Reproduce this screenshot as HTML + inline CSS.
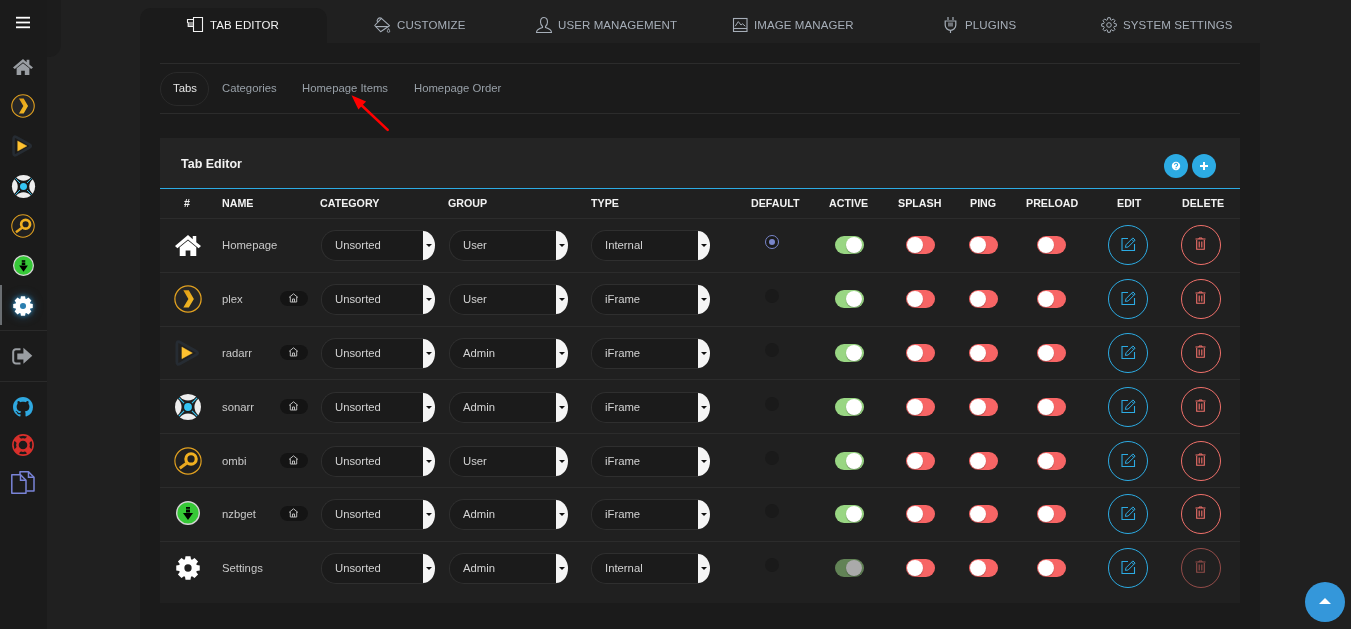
<!DOCTYPE html>
<html><head><meta charset="utf-8"><style>
html,body{margin:0;padding:0;width:1351px;height:629px;overflow:hidden;background:#202020;font-family:'Liberation Sans', sans-serif}
</style></head><body><div style="position:absolute;left:0;top:0;width:1351px;height:629px;will-change:transform">
<div style="position:absolute;left:0;top:0;width:47px;height:629px;background:#1b1b1b"></div><div style="position:absolute;left:47px;top:0;width:14px;height:57px;border-radius:0 0 12px 0;background:#1c1c1c"></div><svg style="position:absolute;left:16px;top:16px;" width="14" height="13" viewBox="0 0 14 13" preserveAspectRatio="none"><rect x="0" y="0.8" width="14" height="1.8" fill="#fff"/><rect x="0" y="5.6" width="14" height="1.8" fill="#fff"/><rect x="0" y="10.4" width="14" height="1.8" fill="#fff"/></svg><svg style="position:absolute;left:13px;top:59px;overflow:visible;" width="20" height="16" viewBox="1 2 22 19" preserveAspectRatio="none"><path d="M12 2 L1 12 L3 14 L12 6 L21 14 L23 12 L19 8.5 V3 H16 V5.8 Z" fill="#9a9ea3"/><path d="M5 13 L12 7 L19 13 V21 H14 V16 H10 V21 H5 Z" fill="#9a9ea3"/></svg><svg style="position:absolute;left:11px;top:94px;" width="24" height="24" viewBox="-14.3 -14.3 28.6 28.6" preserveAspectRatio="none"><defs><linearGradient id="pg" x1="0" y1="0" x2="1" y2="1"><stop offset="0" stop-color="#e09b12"/><stop offset="1" stop-color="#f7c02a"/></linearGradient></defs><circle cx="0" cy="0" r="13.4" fill="#262626" stroke="#e0a020" stroke-width="1.3"/><path d="M-4.8 -8.9 H0.8 L6 0 L0.8 8.8 H-4.8 L0.4 0 Z" fill="url(#pg)"/></svg><svg style="position:absolute;left:10px;top:133px;" width="24" height="26" viewBox="0 0 24 26" preserveAspectRatio="none"><path d="M3.60 5.80 Q3.60 2.60 6.39 4.16 L19.41 11.44 Q22.20 13.00 19.41 14.56 L6.39 21.84 Q3.60 23.40 3.60 20.20 Z" fill="none" stroke="#262c33" stroke-width="2.6"/><path d="M7.7 7.9 L16.9 13 L7.7 18.1 Z" fill="#ffc230" stroke="#ffc230" stroke-width="0.4" stroke-linejoin="round"/></svg><svg style="position:absolute;left:10.5px;top:173.7px;" width="25" height="25" viewBox="-14.3 -14.3 28.6 28.6" preserveAspectRatio="none"><path d="M-8.3 -10.6 A14.2 14.2 0 0 1 8.3 -10.6 A10.6 10.6 0 0 1 -8.3 -10.6 Z" fill="#eeeeee" transform="rotate(0)"/><path d="M-8.3 -10.6 A14.2 14.2 0 0 1 8.3 -10.6 A10.6 10.6 0 0 1 -8.3 -10.6 Z" fill="#eeeeee" transform="rotate(90)"/><path d="M-8.3 -10.6 A14.2 14.2 0 0 1 8.3 -10.6 A10.6 10.6 0 0 1 -8.3 -10.6 Z" fill="#eeeeee" transform="rotate(180)"/><path d="M-8.3 -10.6 A14.2 14.2 0 0 1 8.3 -10.6 A10.6 10.6 0 0 1 -8.3 -10.6 Z" fill="#eeeeee" transform="rotate(270)"/><path d="M-4 -4 L-9.3 -9.3 M4 -4 L9.3 -9.3 M-4 4 L-9.3 9.3 M4 4 L9.3 9.3" stroke="#35c5f4" stroke-width="1.1"/><circle cx="0" cy="0" r="5.2" fill="#1b1b1b"/><circle cx="0" cy="0" r="4" fill="#35c5f4"/></svg><svg style="position:absolute;left:11px;top:214px;" width="24" height="24" viewBox="-14.3 -14.3 28.6 28.6" preserveAspectRatio="none"><circle cx="0" cy="0" r="13.4" fill="#202020" stroke="#e0a020" stroke-width="1.2"/><circle cx="3.1" cy="-2.1" r="5.3" fill="none" stroke="#f0b020" stroke-width="3.2"/><path d="M-0.8 1.8 L-8.4 7.4" stroke="#e8a820" stroke-width="3" stroke-linecap="butt"/></svg><svg style="position:absolute;left:13px;top:255px;" width="21" height="21" viewBox="-12 -12 24 24" preserveAspectRatio="none"><circle cx="0" cy="0" r="11.3" fill="#36c837" stroke="#d4d4d4" stroke-width="1.4"/><rect x="-2" y="-6" width="4" height="1.8" fill="#000"/><rect x="-2" y="-3.5" width="4" height="3" fill="#000"/><path d="M-5 0 H5 L0 7 Z" fill="#000"/></svg><div style="position:absolute;left:0;top:285px;width:2px;height:40px;background:#6a6e72"></div><svg style="position:absolute;left:13px;top:296px;filter:drop-shadow(0 0 2px rgba(43,140,196,0.9)) drop-shadow(0 0 4px rgba(43,140,196,0.5));" width="20" height="20" viewBox="0 0 24 24" preserveAspectRatio="none"><path fill="#ffffff" d="M9.00 3.30 L9.51 0.26 L14.49 0.26 L15.00 3.30 L16.03 3.73 L18.54 1.94 L22.06 5.46 L20.27 7.97 L20.70 9.00 L23.74 9.51 L23.74 14.49 L20.70 15.00 L20.27 16.03 L22.06 18.54 L18.54 22.06 L16.03 20.27 L15.00 20.70 L14.49 23.74 L9.51 23.74 L9.00 20.70 L7.97 20.27 L5.46 22.06 L1.94 18.54 L3.73 16.03 L3.30 15.00 L0.26 14.49 L0.26 9.51 L3.30 9.00 L3.73 7.97 L1.94 5.46 L5.46 1.94 L7.97 3.73 Z"/><circle cx="12" cy="12" r="3.65" fill="#2a7fb0"/></svg><div style="position:absolute;left:0;top:330px;width:47px;height:1px;background:#2a2a2a"></div><div style="position:absolute;left:0;top:381px;width:47px;height:1px;background:#2a2a2a"></div><svg style="position:absolute;left:12px;top:347px;" width="21" height="18" viewBox="0 0 21 18" preserveAspectRatio="none"><path d="M8.5 2.3 H4 A2.7 2.7 0 0 0 1.2 5 V13.8 A2.7 2.7 0 0 0 4 16.4 H8.5" fill="none" stroke="#9a9ea3" stroke-width="2"/><path d="M5.3 6.4 H11.4 V0.8 L20.3 8.7 L11.4 16.7 V12.5 H5.3 Z" fill="#9a9ea3"/></svg><svg style="position:absolute;left:13px;top:397px;" width="20" height="20" viewBox="0 0 16 16" preserveAspectRatio="none"><path fill="#2fa8e0" d="M8 0C3.58 0 0 3.58 0 8c0 3.54 2.29 6.53 5.47 7.59.4.07.55-.17.55-.38 0-.19-.01-.82-.01-1.49-2.01.37-2.53-.49-2.69-.94-.09-.23-.48-.94-.82-1.13-.28-.15-.68-.52-.01-.53.63-.01 1.08.58 1.23.82.72 1.21 1.87.87 2.33.66.07-.52.28-.87.51-1.07-1.78-.2-3.64-.89-3.64-3.95 0-.87.31-1.59.82-2.15-.08-.2-.36-1.02.08-2.12 0 0 .67-.21 2.2.82.64-.18 1.32-.27 2-.27.68 0 1.36.09 2 .27 1.53-1.04 2.2-.82 2.2-.82.44 1.1.16 1.92.08 2.12.51.56.82 1.27.82 2.15 0 3.07-1.87 3.75-3.65 3.95.29.25.54.73.54 1.48 0 1.07-.01 1.93-.01 2.2 0 .21.15.46.55.38A8.013 8.013 0 0016 8c0-4.42-3.58-8-8-8z"/></svg><svg style="position:absolute;left:12px;top:434px;" width="22" height="22" viewBox="-11.2 -11.2 22.4 22.4" preserveAspectRatio="none"><circle r="11.1" fill="#d9302c"/><circle r="7.9" fill="none" stroke="#1b1b1b" stroke-width="3.2"/><path d="M-7 -7 L7 7 M7 -7 L-7 7" stroke="#d9302c" stroke-width="6"/><circle r="6.3" fill="none" stroke="#d9302c" stroke-width="1.4"/><circle r="4.4" fill="#1b1b1b"/></svg><svg style="position:absolute;left:11px;top:471px;" width="24" height="23" viewBox="0 0 24 23" preserveAspectRatio="none"><path d="M9 3.8 V0.8 H17.5 L23 6.3 V20.1 H15.5" fill="none" stroke="#7a84d8" stroke-width="1.5" stroke-linejoin="round"/><path d="M17.5 0.8 V6.3 H23" fill="none" stroke="#7a84d8" stroke-width="1.5"/><path d="M0.8 3.8 H9.5 L15 9.3 V22.2 H0.8 Z" fill="none" stroke="#7a84d8" stroke-width="1.5" stroke-linejoin="round"/><path d="M9.5 3.8 V9.3 H15" fill="none" stroke="#7a84d8" stroke-width="1.5"/></svg><div style="position:absolute;left:140px;top:8px;width:187px;height:40px;border-radius:11px 11px 0 0;background:#1b1b1b"></div><div style="position:absolute;left:140px;top:43px;width:1120px;height:586px;background:#1b1b1b"></div><div style="position:absolute;top:18px;font-family:'Liberation Sans', sans-serif;font-size:11.5px;letter-spacing:0.1px;white-space:nowrap;line-height:14px;left:210px;color:#f2f2f2">TAB EDITOR</div><div style="position:absolute;top:18px;font-family:'Liberation Sans', sans-serif;font-size:11.5px;letter-spacing:0.1px;white-space:nowrap;line-height:14px;left:397px;color:#a6aeb8">CUSTOMIZE</div><div style="position:absolute;top:18px;font-family:'Liberation Sans', sans-serif;font-size:11.5px;letter-spacing:0.1px;white-space:nowrap;line-height:14px;left:558px;color:#a6aeb8">USER MANAGEMENT</div><div style="position:absolute;top:18px;font-family:'Liberation Sans', sans-serif;font-size:11.5px;letter-spacing:0.1px;white-space:nowrap;line-height:14px;left:754px;color:#a6aeb8">IMAGE MANAGER</div><div style="position:absolute;top:18px;font-family:'Liberation Sans', sans-serif;font-size:11.5px;letter-spacing:0.1px;white-space:nowrap;line-height:14px;left:965px;color:#a6aeb8">PLUGINS</div><div style="position:absolute;top:18px;font-family:'Liberation Sans', sans-serif;font-size:11.5px;letter-spacing:0.1px;white-space:nowrap;line-height:14px;left:1123px;color:#a6aeb8">SYSTEM SETTINGS</div><svg style="position:absolute;left:186px;top:16px;" width="18" height="17" viewBox="0 0 18 17" preserveAspectRatio="none"><path d="M7.5 1.5 H16.5 V15.5 H7.5 Z" fill="none" stroke="#f2f2f2" stroke-width="1.1"/><rect x="2" y="6" width="5" height="4" fill="#8a8a8a"/><path d="M7.5 3.5 H1.5 V6.5 L2.2 7 V10.5 H7.5" fill="none" stroke="#f2f2f2" stroke-width="1.1"/></svg><svg style="position:absolute;left:372px;top:16px;" width="20" height="18" viewBox="0 0 20 18" preserveAspectRatio="none"><path d="M9.4 2.3 L17.5 9.7 L8.6 15.7 L2.7 9.5 Z" fill="none" stroke="#a6aeb8" stroke-width="1.05" stroke-linejoin="round"/><path d="M5.6 6.4 A2.9 2.9 0 0 1 9.4 2.3" fill="none" stroke="#a6aeb8" stroke-width="1.05"/><path d="M3.8 10.6 H15.8" stroke="#a6aeb8" stroke-width="1.2"/><path d="M16.5 12.6 L17.6 14.6 A1.2 1.2 0 1 1 15.4 14.6 Z" fill="none" stroke="#a6aeb8" stroke-width="0.9"/></svg><svg style="position:absolute;left:535px;top:16px;" width="18" height="18" viewBox="0 0 18 18" preserveAspectRatio="none"><path d="M9 1.5 C6.5 1.5 5.5 3.5 5.5 6 C5.5 8 6.5 9.5 7.5 10.5 L7.5 11.5 C4 12.5 1.5 14 1.5 16.5 H16.5 C16.5 14 14 12.5 10.5 11.5 L10.5 10.5 C11.5 9.5 12.5 8 12.5 6 C12.5 3.5 11.5 1.5 9 1.5 Z" fill="none" stroke="#a6aeb8" stroke-width="1.1"/></svg><svg style="position:absolute;left:732px;top:17px;" width="16" height="15" viewBox="0 0 16 15" preserveAspectRatio="none"><rect x="1.5" y="1.5" width="13.5" height="13" fill="none" stroke="#a6aeb8" stroke-width="1.1"/><path d="M3.2 9.2 L6.3 4.6 L9 8 L10.5 6.8 L13.3 9.2" fill="none" stroke="#a6aeb8" stroke-width="1"/><path d="M1.5 11.5 H15" stroke="#a6aeb8" stroke-width="1.1"/></svg><svg style="position:absolute;left:944px;top:16px;" width="13" height="18" viewBox="0 0 13 18" preserveAspectRatio="none"><path d="M4 1 V4 M9 1 V4" stroke="#a6aeb8" stroke-width="1.2"/><path d="M1.2 5 H11.8 V9 A5.3 5.3 0 0 1 1.2 9 Z" fill="none" stroke="#a6aeb8" stroke-width="1.2"/><rect x="4" y="6.5" width="5" height="4" fill="#a6aeb8" opacity="0.6"/><path d="M6.5 14.3 V17" stroke="#a6aeb8" stroke-width="1.2"/></svg><svg style="position:absolute;left:1100px;top:16px;" width="18" height="18" viewBox="0 0 18 18" preserveAspectRatio="none"><path fill="none" stroke="#a6aeb8" stroke-width="1" stroke-linejoin="round" d="M7.42 3.84 L7.84 1.69 L10.16 1.69 L10.58 3.84 L11.54 4.23 L13.35 3.01 L14.99 4.65 L13.77 6.46 L14.16 7.42 L16.31 7.84 L16.31 10.16 L14.16 10.58 L13.77 11.54 L14.99 13.35 L13.35 14.99 L11.54 13.77 L10.58 14.16 L10.16 16.31 L7.84 16.31 L7.42 14.16 L6.46 13.77 L4.65 14.99 L3.01 13.35 L4.23 11.54 L3.84 10.58 L1.69 10.16 L1.69 7.84 L3.84 7.42 L4.23 6.46 L3.01 4.65 L4.65 3.01 L6.46 4.23 Z"/><circle cx="9" cy="9" r="2.3" fill="none" stroke="#a6aeb8" stroke-width="1"/></svg><div style="position:absolute;left:160px;top:63px;width:1080px;height:1px;background:#2c2c2c"></div><div style="position:absolute;left:160px;top:113px;width:1080px;height:1px;background:#2c2c2c"></div><div style="position:absolute;left:160px;top:72px;width:47px;height:32px;border:1px solid #2a2a2a;border-radius:17px"></div><div style="position:absolute;top:81px;font-family:'Liberation Sans', sans-serif;font-size:11.3px;white-space:nowrap;line-height:14px;left:173px;color:#e6e6e6">Tabs</div><div style="position:absolute;top:81px;font-family:'Liberation Sans', sans-serif;font-size:11.3px;white-space:nowrap;line-height:14px;left:222px;color:#98a0a8">Categories</div><div style="position:absolute;top:81px;font-family:'Liberation Sans', sans-serif;font-size:11.3px;white-space:nowrap;line-height:14px;left:302px;color:#98a0a8">Homepage Items</div><div style="position:absolute;top:81px;font-family:'Liberation Sans', sans-serif;font-size:11.3px;white-space:nowrap;line-height:14px;left:414px;color:#98a0a8">Homepage Order</div><svg style="position:absolute;left:340px;top:85px;" width="60" height="50" viewBox="0 0 60 50" preserveAspectRatio="none"><path d="M47.7 44.9 L16 15" stroke="#ff0000" stroke-width="2.6" stroke-linecap="round"/><path d="M11.5 10.3 L26.1 16.5 L18.4 24.6 Z" fill="#ff0000"/></svg><div style="position:absolute;left:160px;top:138px;width:1080px;height:50px;background:#242424"></div><div style="position:absolute;left:160px;top:188px;width:1080px;height:415px;background:#202020"></div><div style="position:absolute;left:181px;top:157px;font-family:'Liberation Sans', sans-serif;font-size:12.5px;font-weight:bold;color:#f2f2f2;line-height:14px">Tab Editor</div><div style="position:absolute;left:1164px;top:154px;width:24px;height:24px;border-radius:50%;background:#2cabe3"></div><div style="position:absolute;left:1192px;top:154px;width:24px;height:24px;border-radius:50%;background:#2cabe3"></div><svg style="position:absolute;left:1170px;top:160px;" width="12" height="12" viewBox="0 0 12 12" preserveAspectRatio="none"><circle cx="6" cy="6" r="4.2" fill="#fff"/><path d="M4.6 4.9 A1.5 1.5 0 1 1 6.6 6.2 C6.1 6.5 6 6.8 6 7.2" fill="none" stroke="#2cabe3" stroke-width="1.1"/><circle cx="6" cy="8.6" r="0.6" fill="#2cabe3"/></svg><svg style="position:absolute;left:1198px;top:160px;" width="12" height="12" viewBox="0 0 12 12" preserveAspectRatio="none"><path d="M6 2 V10 M2 6 H10" stroke="#fff" stroke-width="2"/></svg><div style="position:absolute;left:160px;top:188px;width:1080px;height:1px;background:#2cabe3"></div><div style="position:absolute;top:197px;font-family:'Liberation Sans', sans-serif;font-size:10.7px;font-weight:bold;color:#f2f2f2;white-space:nowrap;line-height:12px;left:184px">#</div><div style="position:absolute;top:197px;font-family:'Liberation Sans', sans-serif;font-size:10.7px;font-weight:bold;color:#f2f2f2;white-space:nowrap;line-height:12px;left:222px">NAME</div><div style="position:absolute;top:197px;font-family:'Liberation Sans', sans-serif;font-size:10.7px;font-weight:bold;color:#f2f2f2;white-space:nowrap;line-height:12px;left:320px">CATEGORY</div><div style="position:absolute;top:197px;font-family:'Liberation Sans', sans-serif;font-size:10.7px;font-weight:bold;color:#f2f2f2;white-space:nowrap;line-height:12px;left:448px">GROUP</div><div style="position:absolute;top:197px;font-family:'Liberation Sans', sans-serif;font-size:10.7px;font-weight:bold;color:#f2f2f2;white-space:nowrap;line-height:12px;left:591px">TYPE</div><div style="position:absolute;top:197px;font-family:'Liberation Sans', sans-serif;font-size:10.7px;font-weight:bold;color:#f2f2f2;white-space:nowrap;line-height:12px;left:751px">DEFAULT</div><div style="position:absolute;top:197px;font-family:'Liberation Sans', sans-serif;font-size:10.7px;font-weight:bold;color:#f2f2f2;white-space:nowrap;line-height:12px;left:829px">ACTIVE</div><div style="position:absolute;top:197px;font-family:'Liberation Sans', sans-serif;font-size:10.7px;font-weight:bold;color:#f2f2f2;white-space:nowrap;line-height:12px;left:898px">SPLASH</div><div style="position:absolute;top:197px;font-family:'Liberation Sans', sans-serif;font-size:10.7px;font-weight:bold;color:#f2f2f2;white-space:nowrap;line-height:12px;left:970px">PING</div><div style="position:absolute;top:197px;font-family:'Liberation Sans', sans-serif;font-size:10.7px;font-weight:bold;color:#f2f2f2;white-space:nowrap;line-height:12px;left:1026px">PRELOAD</div><div style="position:absolute;top:197px;font-family:'Liberation Sans', sans-serif;font-size:10.7px;font-weight:bold;color:#f2f2f2;white-space:nowrap;line-height:12px;left:1117px">EDIT</div><div style="position:absolute;top:197px;font-family:'Liberation Sans', sans-serif;font-size:10.7px;font-weight:bold;color:#f2f2f2;white-space:nowrap;line-height:12px;left:1182px">DELETE</div><div style="position:absolute;left:160px;top:218px;width:1080px;height:1px;background:#2c2c2c"></div><svg style="position:absolute;left:175px;top:235px;" width="26" height="21" viewBox="1 2 22 19" preserveAspectRatio="none"><path d="M12 2 L1 12 L3 14 L12 6 L21 14 L23 12 L19 8.5 V3 H16 V5.8 Z" fill="#ffffff"/><path d="M5 13 L12 7 L19 13 V21 H14 V16 H10 V21 H5 Z" fill="#ffffff"/></svg><div style="position:absolute;left:222px;top:238px;font-family:'Liberation Sans', sans-serif;font-size:11.3px;color:#c9c9c9;line-height:14px;white-space:nowrap">Homepage</div><div style="position:absolute;left:321px;top:230px;width:102px;height:29px;border:1px solid #2f2f2f;border-radius:15px 0 0 15px;border-right:none;background:#1b1b1b"></div><div style="position:absolute;left:423px;top:231px;width:12px;height:29px;border-radius:0 100% 100% 0/0 50% 50% 0;background:#f5f5f5"></div><div style="position:absolute;left:426px;top:244px;width:0;height:0;border-left:3px solid transparent;border-right:3px solid transparent;border-top:3px solid #111"></div><div style="position:absolute;left:335px;top:238px;font-family:'Liberation Sans', sans-serif;font-size:11.3px;color:#d2d2d2;line-height:14px;white-space:nowrap">Unsorted</div><div style="position:absolute;left:449px;top:230px;width:107px;height:29px;border:1px solid #2f2f2f;border-radius:15px 0 0 15px;border-right:none;background:#1b1b1b"></div><div style="position:absolute;left:556px;top:231px;width:12px;height:29px;border-radius:0 100% 100% 0/0 50% 50% 0;background:#f5f5f5"></div><div style="position:absolute;left:559px;top:244px;width:0;height:0;border-left:3px solid transparent;border-right:3px solid transparent;border-top:3px solid #111"></div><div style="position:absolute;left:463px;top:238px;font-family:'Liberation Sans', sans-serif;font-size:11.3px;color:#d2d2d2;line-height:14px;white-space:nowrap">User</div><div style="position:absolute;left:591px;top:230px;width:107px;height:29px;border:1px solid #2f2f2f;border-radius:15px 0 0 15px;border-right:none;background:#1b1b1b"></div><div style="position:absolute;left:698px;top:231px;width:12px;height:29px;border-radius:0 100% 100% 0/0 50% 50% 0;background:#f5f5f5"></div><div style="position:absolute;left:701px;top:244px;width:0;height:0;border-left:3px solid transparent;border-right:3px solid transparent;border-top:3px solid #111"></div><div style="position:absolute;left:605px;top:238px;font-family:'Liberation Sans', sans-serif;font-size:11.3px;color:#d2d2d2;line-height:14px;white-space:nowrap">Internal</div><div style="position:absolute;left:765px;top:235px;width:12px;height:12px;border:1px solid #7986cb;border-radius:50%;background:#1a1a1a"></div><div style="position:absolute;left:769px;top:239px;width:6px;height:6px;border-radius:50%;background:#7986cb"></div><div style="position:absolute;left:835px;top:236px;width:29px;height:18px;border-radius:9px;background:#99d683"></div><div style="position:absolute;left:846px;top:237px;width:16px;height:16px;border-radius:50%;background:#fff;box-shadow:0 1px 1px rgba(0,0,0,0.3)"></div><div style="position:absolute;left:906px;top:236px;width:29px;height:18px;border-radius:9px;background:#f76565"></div><div style="position:absolute;left:907px;top:237px;width:16px;height:16px;border-radius:50%;background:#fff;box-shadow:0 1px 1px rgba(0,0,0,0.3)"></div><div style="position:absolute;left:969px;top:236px;width:29px;height:18px;border-radius:9px;background:#f76565"></div><div style="position:absolute;left:970px;top:237px;width:16px;height:16px;border-radius:50%;background:#fff;box-shadow:0 1px 1px rgba(0,0,0,0.3)"></div><div style="position:absolute;left:1037px;top:236px;width:29px;height:18px;border-radius:9px;background:#f76565"></div><div style="position:absolute;left:1038px;top:237px;width:16px;height:16px;border-radius:50%;background:#fff;box-shadow:0 1px 1px rgba(0,0,0,0.3)"></div><div style="position:absolute;left:1108px;top:225px;width:38px;height:38px;border:1px solid #2cabe3;border-radius:50%"></div><svg style="position:absolute;left:1120px;top:236px;" width="17" height="16" viewBox="0 0 17 16" preserveAspectRatio="none"><path d="M8 2.5 H2 V14.5 H14.5 V8" fill="none" stroke="#2cabe3" stroke-width="1.1"/><path d="M5.4 11.4 L6 8.8 L12.9 1.9 L15.1 4.1 L8.2 11 Z M11.6 3.2 L13.8 5.4" fill="none" stroke="#2cabe3" stroke-width="1" stroke-linejoin="round"/></svg><div style="position:absolute;left:1181px;top:225px;width:38px;height:38px;border:1px solid #f0706a;border-radius:50%;"></div><svg style="position:absolute;left:1195px;top:237px;" width="11" height="13" viewBox="0 0 11 13" preserveAspectRatio="none"><path d="M0.5 2 H10.5 M4 2 V1 H7 V2" fill="none" stroke="#f0706a" stroke-width="1"/><path d="M1.7 3 V12.3 H9.3 V3" fill="none" stroke="#f0706a" stroke-width="1.1"/><path d="M4.2 4.5 V10.5 M6.8 4.5 V10.5" stroke="#f0706a" stroke-width="1.1"/></svg><div style="position:absolute;left:160px;top:272px;width:1080px;height:1px;background:#2c2c2c"></div><svg style="position:absolute;left:174px;top:285px;" width="28" height="28" viewBox="-14.3 -14.3 28.6 28.6" preserveAspectRatio="none"><defs><linearGradient id="pg" x1="0" y1="0" x2="1" y2="1"><stop offset="0" stop-color="#e09b12"/><stop offset="1" stop-color="#f7c02a"/></linearGradient></defs><circle cx="0" cy="0" r="13.4" fill="#262626" stroke="#e0a020" stroke-width="1.3"/><path d="M-4.8 -8.9 H0.8 L6 0 L0.8 8.8 H-4.8 L0.4 0 Z" fill="url(#pg)"/></svg><div style="position:absolute;left:222px;top:292px;font-family:'Liberation Sans', sans-serif;font-size:11.3px;color:#c9c9c9;line-height:14px;white-space:nowrap">plex</div><div style="position:absolute;left:280px;top:291px;width:28px;height:15px;border-radius:8px;background:#141414"></div><svg style="position:absolute;left:288px;top:293px;" width="11" height="10" viewBox="0 0 11 10" preserveAspectRatio="none"><path d="M1 4.5 L5.5 0.8 L10 4.5" fill="none" stroke="#bbb" stroke-width="1"/><path d="M2.3 4 V9 H8.7 V4 M4.5 9 V6 H6.5 V9" fill="none" stroke="#bbb" stroke-width="1"/></svg><div style="position:absolute;left:321px;top:284px;width:102px;height:29px;border:1px solid #2f2f2f;border-radius:15px 0 0 15px;border-right:none;background:#1b1b1b"></div><div style="position:absolute;left:423px;top:285px;width:12px;height:29px;border-radius:0 100% 100% 0/0 50% 50% 0;background:#f5f5f5"></div><div style="position:absolute;left:426px;top:298px;width:0;height:0;border-left:3px solid transparent;border-right:3px solid transparent;border-top:3px solid #111"></div><div style="position:absolute;left:335px;top:292px;font-family:'Liberation Sans', sans-serif;font-size:11.3px;color:#d2d2d2;line-height:14px;white-space:nowrap">Unsorted</div><div style="position:absolute;left:449px;top:284px;width:107px;height:29px;border:1px solid #2f2f2f;border-radius:15px 0 0 15px;border-right:none;background:#1b1b1b"></div><div style="position:absolute;left:556px;top:285px;width:12px;height:29px;border-radius:0 100% 100% 0/0 50% 50% 0;background:#f5f5f5"></div><div style="position:absolute;left:559px;top:298px;width:0;height:0;border-left:3px solid transparent;border-right:3px solid transparent;border-top:3px solid #111"></div><div style="position:absolute;left:463px;top:292px;font-family:'Liberation Sans', sans-serif;font-size:11.3px;color:#d2d2d2;line-height:14px;white-space:nowrap">User</div><div style="position:absolute;left:591px;top:284px;width:107px;height:29px;border:1px solid #2f2f2f;border-radius:15px 0 0 15px;border-right:none;background:#1b1b1b"></div><div style="position:absolute;left:698px;top:285px;width:12px;height:29px;border-radius:0 100% 100% 0/0 50% 50% 0;background:#f5f5f5"></div><div style="position:absolute;left:701px;top:298px;width:0;height:0;border-left:3px solid transparent;border-right:3px solid transparent;border-top:3px solid #111"></div><div style="position:absolute;left:605px;top:292px;font-family:'Liberation Sans', sans-serif;font-size:11.3px;color:#d2d2d2;line-height:14px;white-space:nowrap">iFrame</div><div style="position:absolute;left:765px;top:289px;width:14px;height:14px;border-radius:50%;background:#1a1a1a"></div><div style="position:absolute;left:835px;top:290px;width:29px;height:18px;border-radius:9px;background:#99d683"></div><div style="position:absolute;left:846px;top:291px;width:16px;height:16px;border-radius:50%;background:#fff;box-shadow:0 1px 1px rgba(0,0,0,0.3)"></div><div style="position:absolute;left:906px;top:290px;width:29px;height:18px;border-radius:9px;background:#f76565"></div><div style="position:absolute;left:907px;top:291px;width:16px;height:16px;border-radius:50%;background:#fff;box-shadow:0 1px 1px rgba(0,0,0,0.3)"></div><div style="position:absolute;left:969px;top:290px;width:29px;height:18px;border-radius:9px;background:#f76565"></div><div style="position:absolute;left:970px;top:291px;width:16px;height:16px;border-radius:50%;background:#fff;box-shadow:0 1px 1px rgba(0,0,0,0.3)"></div><div style="position:absolute;left:1037px;top:290px;width:29px;height:18px;border-radius:9px;background:#f76565"></div><div style="position:absolute;left:1038px;top:291px;width:16px;height:16px;border-radius:50%;background:#fff;box-shadow:0 1px 1px rgba(0,0,0,0.3)"></div><div style="position:absolute;left:1108px;top:279px;width:38px;height:38px;border:1px solid #2cabe3;border-radius:50%"></div><svg style="position:absolute;left:1120px;top:290px;" width="17" height="16" viewBox="0 0 17 16" preserveAspectRatio="none"><path d="M8 2.5 H2 V14.5 H14.5 V8" fill="none" stroke="#2cabe3" stroke-width="1.1"/><path d="M5.4 11.4 L6 8.8 L12.9 1.9 L15.1 4.1 L8.2 11 Z M11.6 3.2 L13.8 5.4" fill="none" stroke="#2cabe3" stroke-width="1" stroke-linejoin="round"/></svg><div style="position:absolute;left:1181px;top:279px;width:38px;height:38px;border:1px solid #f0706a;border-radius:50%;"></div><svg style="position:absolute;left:1195px;top:291px;" width="11" height="13" viewBox="0 0 11 13" preserveAspectRatio="none"><path d="M0.5 2 H10.5 M4 2 V1 H7 V2" fill="none" stroke="#f0706a" stroke-width="1"/><path d="M1.7 3 V12.3 H9.3 V3" fill="none" stroke="#f0706a" stroke-width="1.1"/><path d="M4.2 4.5 V10.5 M6.8 4.5 V10.5" stroke="#f0706a" stroke-width="1.1"/></svg><div style="position:absolute;left:160px;top:326px;width:1080px;height:1px;background:#2c2c2c"></div><svg style="position:absolute;left:175px;top:339px;" width="26" height="28" viewBox="0 0 26 28" preserveAspectRatio="none"><path d="M1.90 5.00 Q1.90 1.40 5.04 3.16 L21.16 12.24 Q24.30 14.00 21.16 15.76 L5.04 24.84 Q1.90 26.60 1.90 23.00 Z" fill="none" stroke="#262c33" stroke-width="2.8"/><path d="M6.9 8 L17.4 14 L6.9 19.7 Z" fill="#ffc230" stroke="#ffc230" stroke-width="0.4" stroke-linejoin="round"/></svg><div style="position:absolute;left:222px;top:346px;font-family:'Liberation Sans', sans-serif;font-size:11.3px;color:#c9c9c9;line-height:14px;white-space:nowrap">radarr</div><div style="position:absolute;left:280px;top:345px;width:28px;height:15px;border-radius:8px;background:#141414"></div><svg style="position:absolute;left:288px;top:347px;" width="11" height="10" viewBox="0 0 11 10" preserveAspectRatio="none"><path d="M1 4.5 L5.5 0.8 L10 4.5" fill="none" stroke="#bbb" stroke-width="1"/><path d="M2.3 4 V9 H8.7 V4 M4.5 9 V6 H6.5 V9" fill="none" stroke="#bbb" stroke-width="1"/></svg><div style="position:absolute;left:321px;top:338px;width:102px;height:29px;border:1px solid #2f2f2f;border-radius:15px 0 0 15px;border-right:none;background:#1b1b1b"></div><div style="position:absolute;left:423px;top:339px;width:12px;height:29px;border-radius:0 100% 100% 0/0 50% 50% 0;background:#f5f5f5"></div><div style="position:absolute;left:426px;top:352px;width:0;height:0;border-left:3px solid transparent;border-right:3px solid transparent;border-top:3px solid #111"></div><div style="position:absolute;left:335px;top:346px;font-family:'Liberation Sans', sans-serif;font-size:11.3px;color:#d2d2d2;line-height:14px;white-space:nowrap">Unsorted</div><div style="position:absolute;left:449px;top:338px;width:107px;height:29px;border:1px solid #2f2f2f;border-radius:15px 0 0 15px;border-right:none;background:#1b1b1b"></div><div style="position:absolute;left:556px;top:339px;width:12px;height:29px;border-radius:0 100% 100% 0/0 50% 50% 0;background:#f5f5f5"></div><div style="position:absolute;left:559px;top:352px;width:0;height:0;border-left:3px solid transparent;border-right:3px solid transparent;border-top:3px solid #111"></div><div style="position:absolute;left:463px;top:346px;font-family:'Liberation Sans', sans-serif;font-size:11.3px;color:#d2d2d2;line-height:14px;white-space:nowrap">Admin</div><div style="position:absolute;left:591px;top:338px;width:107px;height:29px;border:1px solid #2f2f2f;border-radius:15px 0 0 15px;border-right:none;background:#1b1b1b"></div><div style="position:absolute;left:698px;top:339px;width:12px;height:29px;border-radius:0 100% 100% 0/0 50% 50% 0;background:#f5f5f5"></div><div style="position:absolute;left:701px;top:352px;width:0;height:0;border-left:3px solid transparent;border-right:3px solid transparent;border-top:3px solid #111"></div><div style="position:absolute;left:605px;top:346px;font-family:'Liberation Sans', sans-serif;font-size:11.3px;color:#d2d2d2;line-height:14px;white-space:nowrap">iFrame</div><div style="position:absolute;left:765px;top:343px;width:14px;height:14px;border-radius:50%;background:#1a1a1a"></div><div style="position:absolute;left:835px;top:344px;width:29px;height:18px;border-radius:9px;background:#99d683"></div><div style="position:absolute;left:846px;top:345px;width:16px;height:16px;border-radius:50%;background:#fff;box-shadow:0 1px 1px rgba(0,0,0,0.3)"></div><div style="position:absolute;left:906px;top:344px;width:29px;height:18px;border-radius:9px;background:#f76565"></div><div style="position:absolute;left:907px;top:345px;width:16px;height:16px;border-radius:50%;background:#fff;box-shadow:0 1px 1px rgba(0,0,0,0.3)"></div><div style="position:absolute;left:969px;top:344px;width:29px;height:18px;border-radius:9px;background:#f76565"></div><div style="position:absolute;left:970px;top:345px;width:16px;height:16px;border-radius:50%;background:#fff;box-shadow:0 1px 1px rgba(0,0,0,0.3)"></div><div style="position:absolute;left:1037px;top:344px;width:29px;height:18px;border-radius:9px;background:#f76565"></div><div style="position:absolute;left:1038px;top:345px;width:16px;height:16px;border-radius:50%;background:#fff;box-shadow:0 1px 1px rgba(0,0,0,0.3)"></div><div style="position:absolute;left:1108px;top:333px;width:38px;height:38px;border:1px solid #2cabe3;border-radius:50%"></div><svg style="position:absolute;left:1120px;top:344px;" width="17" height="16" viewBox="0 0 17 16" preserveAspectRatio="none"><path d="M8 2.5 H2 V14.5 H14.5 V8" fill="none" stroke="#2cabe3" stroke-width="1.1"/><path d="M5.4 11.4 L6 8.8 L12.9 1.9 L15.1 4.1 L8.2 11 Z M11.6 3.2 L13.8 5.4" fill="none" stroke="#2cabe3" stroke-width="1" stroke-linejoin="round"/></svg><div style="position:absolute;left:1181px;top:333px;width:38px;height:38px;border:1px solid #f0706a;border-radius:50%;"></div><svg style="position:absolute;left:1195px;top:345px;" width="11" height="13" viewBox="0 0 11 13" preserveAspectRatio="none"><path d="M0.5 2 H10.5 M4 2 V1 H7 V2" fill="none" stroke="#f0706a" stroke-width="1"/><path d="M1.7 3 V12.3 H9.3 V3" fill="none" stroke="#f0706a" stroke-width="1.1"/><path d="M4.2 4.5 V10.5 M6.8 4.5 V10.5" stroke="#f0706a" stroke-width="1.1"/></svg><div style="position:absolute;left:160px;top:379px;width:1080px;height:1px;background:#2c2c2c"></div><svg style="position:absolute;left:174px;top:393px;" width="28" height="28" viewBox="-14.3 -14.3 28.6 28.6" preserveAspectRatio="none"><path d="M-8.3 -10.6 A14.2 14.2 0 0 1 8.3 -10.6 A10.6 10.6 0 0 1 -8.3 -10.6 Z" fill="#eeeeee" transform="rotate(0)"/><path d="M-8.3 -10.6 A14.2 14.2 0 0 1 8.3 -10.6 A10.6 10.6 0 0 1 -8.3 -10.6 Z" fill="#eeeeee" transform="rotate(90)"/><path d="M-8.3 -10.6 A14.2 14.2 0 0 1 8.3 -10.6 A10.6 10.6 0 0 1 -8.3 -10.6 Z" fill="#eeeeee" transform="rotate(180)"/><path d="M-8.3 -10.6 A14.2 14.2 0 0 1 8.3 -10.6 A10.6 10.6 0 0 1 -8.3 -10.6 Z" fill="#eeeeee" transform="rotate(270)"/><path d="M-4 -4 L-9.3 -9.3 M4 -4 L9.3 -9.3 M-4 4 L-9.3 9.3 M4 4 L9.3 9.3" stroke="#35c5f4" stroke-width="1.1"/><circle cx="0" cy="0" r="5.2" fill="#1b1b1b"/><circle cx="0" cy="0" r="4" fill="#35c5f4"/></svg><div style="position:absolute;left:222px;top:400px;font-family:'Liberation Sans', sans-serif;font-size:11.3px;color:#c9c9c9;line-height:14px;white-space:nowrap">sonarr</div><div style="position:absolute;left:280px;top:399px;width:28px;height:15px;border-radius:8px;background:#141414"></div><svg style="position:absolute;left:288px;top:401px;" width="11" height="10" viewBox="0 0 11 10" preserveAspectRatio="none"><path d="M1 4.5 L5.5 0.8 L10 4.5" fill="none" stroke="#bbb" stroke-width="1"/><path d="M2.3 4 V9 H8.7 V4 M4.5 9 V6 H6.5 V9" fill="none" stroke="#bbb" stroke-width="1"/></svg><div style="position:absolute;left:321px;top:392px;width:102px;height:29px;border:1px solid #2f2f2f;border-radius:15px 0 0 15px;border-right:none;background:#1b1b1b"></div><div style="position:absolute;left:423px;top:393px;width:12px;height:29px;border-radius:0 100% 100% 0/0 50% 50% 0;background:#f5f5f5"></div><div style="position:absolute;left:426px;top:406px;width:0;height:0;border-left:3px solid transparent;border-right:3px solid transparent;border-top:3px solid #111"></div><div style="position:absolute;left:335px;top:400px;font-family:'Liberation Sans', sans-serif;font-size:11.3px;color:#d2d2d2;line-height:14px;white-space:nowrap">Unsorted</div><div style="position:absolute;left:449px;top:392px;width:107px;height:29px;border:1px solid #2f2f2f;border-radius:15px 0 0 15px;border-right:none;background:#1b1b1b"></div><div style="position:absolute;left:556px;top:393px;width:12px;height:29px;border-radius:0 100% 100% 0/0 50% 50% 0;background:#f5f5f5"></div><div style="position:absolute;left:559px;top:406px;width:0;height:0;border-left:3px solid transparent;border-right:3px solid transparent;border-top:3px solid #111"></div><div style="position:absolute;left:463px;top:400px;font-family:'Liberation Sans', sans-serif;font-size:11.3px;color:#d2d2d2;line-height:14px;white-space:nowrap">Admin</div><div style="position:absolute;left:591px;top:392px;width:107px;height:29px;border:1px solid #2f2f2f;border-radius:15px 0 0 15px;border-right:none;background:#1b1b1b"></div><div style="position:absolute;left:698px;top:393px;width:12px;height:29px;border-radius:0 100% 100% 0/0 50% 50% 0;background:#f5f5f5"></div><div style="position:absolute;left:701px;top:406px;width:0;height:0;border-left:3px solid transparent;border-right:3px solid transparent;border-top:3px solid #111"></div><div style="position:absolute;left:605px;top:400px;font-family:'Liberation Sans', sans-serif;font-size:11.3px;color:#d2d2d2;line-height:14px;white-space:nowrap">iFrame</div><div style="position:absolute;left:765px;top:397px;width:14px;height:14px;border-radius:50%;background:#1a1a1a"></div><div style="position:absolute;left:835px;top:398px;width:29px;height:18px;border-radius:9px;background:#99d683"></div><div style="position:absolute;left:846px;top:399px;width:16px;height:16px;border-radius:50%;background:#fff;box-shadow:0 1px 1px rgba(0,0,0,0.3)"></div><div style="position:absolute;left:906px;top:398px;width:29px;height:18px;border-radius:9px;background:#f76565"></div><div style="position:absolute;left:907px;top:399px;width:16px;height:16px;border-radius:50%;background:#fff;box-shadow:0 1px 1px rgba(0,0,0,0.3)"></div><div style="position:absolute;left:969px;top:398px;width:29px;height:18px;border-radius:9px;background:#f76565"></div><div style="position:absolute;left:970px;top:399px;width:16px;height:16px;border-radius:50%;background:#fff;box-shadow:0 1px 1px rgba(0,0,0,0.3)"></div><div style="position:absolute;left:1037px;top:398px;width:29px;height:18px;border-radius:9px;background:#f76565"></div><div style="position:absolute;left:1038px;top:399px;width:16px;height:16px;border-radius:50%;background:#fff;box-shadow:0 1px 1px rgba(0,0,0,0.3)"></div><div style="position:absolute;left:1108px;top:387px;width:38px;height:38px;border:1px solid #2cabe3;border-radius:50%"></div><svg style="position:absolute;left:1120px;top:398px;" width="17" height="16" viewBox="0 0 17 16" preserveAspectRatio="none"><path d="M8 2.5 H2 V14.5 H14.5 V8" fill="none" stroke="#2cabe3" stroke-width="1.1"/><path d="M5.4 11.4 L6 8.8 L12.9 1.9 L15.1 4.1 L8.2 11 Z M11.6 3.2 L13.8 5.4" fill="none" stroke="#2cabe3" stroke-width="1" stroke-linejoin="round"/></svg><div style="position:absolute;left:1181px;top:387px;width:38px;height:38px;border:1px solid #f0706a;border-radius:50%;"></div><svg style="position:absolute;left:1195px;top:399px;" width="11" height="13" viewBox="0 0 11 13" preserveAspectRatio="none"><path d="M0.5 2 H10.5 M4 2 V1 H7 V2" fill="none" stroke="#f0706a" stroke-width="1"/><path d="M1.7 3 V12.3 H9.3 V3" fill="none" stroke="#f0706a" stroke-width="1.1"/><path d="M4.2 4.5 V10.5 M6.8 4.5 V10.5" stroke="#f0706a" stroke-width="1.1"/></svg><div style="position:absolute;left:160px;top:433px;width:1080px;height:1px;background:#2c2c2c"></div><svg style="position:absolute;left:174px;top:447px;" width="28" height="28" viewBox="-14.3 -14.3 28.6 28.6" preserveAspectRatio="none"><circle cx="0" cy="0" r="13.4" fill="#202020" stroke="#e0a020" stroke-width="1.2"/><circle cx="3.1" cy="-2.1" r="5.3" fill="none" stroke="#f0b020" stroke-width="3.2"/><path d="M-0.8 1.8 L-8.4 7.4" stroke="#e8a820" stroke-width="3" stroke-linecap="butt"/></svg><div style="position:absolute;left:222px;top:454px;font-family:'Liberation Sans', sans-serif;font-size:11.3px;color:#c9c9c9;line-height:14px;white-space:nowrap">ombi</div><div style="position:absolute;left:280px;top:453px;width:28px;height:15px;border-radius:8px;background:#141414"></div><svg style="position:absolute;left:288px;top:455px;" width="11" height="10" viewBox="0 0 11 10" preserveAspectRatio="none"><path d="M1 4.5 L5.5 0.8 L10 4.5" fill="none" stroke="#bbb" stroke-width="1"/><path d="M2.3 4 V9 H8.7 V4 M4.5 9 V6 H6.5 V9" fill="none" stroke="#bbb" stroke-width="1"/></svg><div style="position:absolute;left:321px;top:446px;width:102px;height:29px;border:1px solid #2f2f2f;border-radius:15px 0 0 15px;border-right:none;background:#1b1b1b"></div><div style="position:absolute;left:423px;top:447px;width:12px;height:29px;border-radius:0 100% 100% 0/0 50% 50% 0;background:#f5f5f5"></div><div style="position:absolute;left:426px;top:460px;width:0;height:0;border-left:3px solid transparent;border-right:3px solid transparent;border-top:3px solid #111"></div><div style="position:absolute;left:335px;top:454px;font-family:'Liberation Sans', sans-serif;font-size:11.3px;color:#d2d2d2;line-height:14px;white-space:nowrap">Unsorted</div><div style="position:absolute;left:449px;top:446px;width:107px;height:29px;border:1px solid #2f2f2f;border-radius:15px 0 0 15px;border-right:none;background:#1b1b1b"></div><div style="position:absolute;left:556px;top:447px;width:12px;height:29px;border-radius:0 100% 100% 0/0 50% 50% 0;background:#f5f5f5"></div><div style="position:absolute;left:559px;top:460px;width:0;height:0;border-left:3px solid transparent;border-right:3px solid transparent;border-top:3px solid #111"></div><div style="position:absolute;left:463px;top:454px;font-family:'Liberation Sans', sans-serif;font-size:11.3px;color:#d2d2d2;line-height:14px;white-space:nowrap">User</div><div style="position:absolute;left:591px;top:446px;width:107px;height:29px;border:1px solid #2f2f2f;border-radius:15px 0 0 15px;border-right:none;background:#1b1b1b"></div><div style="position:absolute;left:698px;top:447px;width:12px;height:29px;border-radius:0 100% 100% 0/0 50% 50% 0;background:#f5f5f5"></div><div style="position:absolute;left:701px;top:460px;width:0;height:0;border-left:3px solid transparent;border-right:3px solid transparent;border-top:3px solid #111"></div><div style="position:absolute;left:605px;top:454px;font-family:'Liberation Sans', sans-serif;font-size:11.3px;color:#d2d2d2;line-height:14px;white-space:nowrap">iFrame</div><div style="position:absolute;left:765px;top:451px;width:14px;height:14px;border-radius:50%;background:#1a1a1a"></div><div style="position:absolute;left:835px;top:452px;width:29px;height:18px;border-radius:9px;background:#99d683"></div><div style="position:absolute;left:846px;top:453px;width:16px;height:16px;border-radius:50%;background:#fff;box-shadow:0 1px 1px rgba(0,0,0,0.3)"></div><div style="position:absolute;left:906px;top:452px;width:29px;height:18px;border-radius:9px;background:#f76565"></div><div style="position:absolute;left:907px;top:453px;width:16px;height:16px;border-radius:50%;background:#fff;box-shadow:0 1px 1px rgba(0,0,0,0.3)"></div><div style="position:absolute;left:969px;top:452px;width:29px;height:18px;border-radius:9px;background:#f76565"></div><div style="position:absolute;left:970px;top:453px;width:16px;height:16px;border-radius:50%;background:#fff;box-shadow:0 1px 1px rgba(0,0,0,0.3)"></div><div style="position:absolute;left:1037px;top:452px;width:29px;height:18px;border-radius:9px;background:#f76565"></div><div style="position:absolute;left:1038px;top:453px;width:16px;height:16px;border-radius:50%;background:#fff;box-shadow:0 1px 1px rgba(0,0,0,0.3)"></div><div style="position:absolute;left:1108px;top:441px;width:38px;height:38px;border:1px solid #2cabe3;border-radius:50%"></div><svg style="position:absolute;left:1120px;top:452px;" width="17" height="16" viewBox="0 0 17 16" preserveAspectRatio="none"><path d="M8 2.5 H2 V14.5 H14.5 V8" fill="none" stroke="#2cabe3" stroke-width="1.1"/><path d="M5.4 11.4 L6 8.8 L12.9 1.9 L15.1 4.1 L8.2 11 Z M11.6 3.2 L13.8 5.4" fill="none" stroke="#2cabe3" stroke-width="1" stroke-linejoin="round"/></svg><div style="position:absolute;left:1181px;top:441px;width:38px;height:38px;border:1px solid #f0706a;border-radius:50%;"></div><svg style="position:absolute;left:1195px;top:453px;" width="11" height="13" viewBox="0 0 11 13" preserveAspectRatio="none"><path d="M0.5 2 H10.5 M4 2 V1 H7 V2" fill="none" stroke="#f0706a" stroke-width="1"/><path d="M1.7 3 V12.3 H9.3 V3" fill="none" stroke="#f0706a" stroke-width="1.1"/><path d="M4.2 4.5 V10.5 M6.8 4.5 V10.5" stroke="#f0706a" stroke-width="1.1"/></svg><div style="position:absolute;left:160px;top:487px;width:1080px;height:1px;background:#2c2c2c"></div><svg style="position:absolute;left:176px;top:500.5px;" width="24" height="24" viewBox="-12 -12 24 24" preserveAspectRatio="none"><circle cx="0" cy="0" r="11.3" fill="#36c837" stroke="#d4d4d4" stroke-width="1.4"/><rect x="-2" y="-6" width="4" height="1.8" fill="#000"/><rect x="-2" y="-3.5" width="4" height="3" fill="#000"/><path d="M-5 0 H5 L0 7 Z" fill="#000"/></svg><div style="position:absolute;left:222px;top:507px;font-family:'Liberation Sans', sans-serif;font-size:11.3px;color:#c9c9c9;line-height:14px;white-space:nowrap">nzbget</div><div style="position:absolute;left:280px;top:506px;width:28px;height:15px;border-radius:8px;background:#141414"></div><svg style="position:absolute;left:288px;top:508px;" width="11" height="10" viewBox="0 0 11 10" preserveAspectRatio="none"><path d="M1 4.5 L5.5 0.8 L10 4.5" fill="none" stroke="#bbb" stroke-width="1"/><path d="M2.3 4 V9 H8.7 V4 M4.5 9 V6 H6.5 V9" fill="none" stroke="#bbb" stroke-width="1"/></svg><div style="position:absolute;left:321px;top:499px;width:102px;height:29px;border:1px solid #2f2f2f;border-radius:15px 0 0 15px;border-right:none;background:#1b1b1b"></div><div style="position:absolute;left:423px;top:500px;width:12px;height:29px;border-radius:0 100% 100% 0/0 50% 50% 0;background:#f5f5f5"></div><div style="position:absolute;left:426px;top:513px;width:0;height:0;border-left:3px solid transparent;border-right:3px solid transparent;border-top:3px solid #111"></div><div style="position:absolute;left:335px;top:507px;font-family:'Liberation Sans', sans-serif;font-size:11.3px;color:#d2d2d2;line-height:14px;white-space:nowrap">Unsorted</div><div style="position:absolute;left:449px;top:499px;width:107px;height:29px;border:1px solid #2f2f2f;border-radius:15px 0 0 15px;border-right:none;background:#1b1b1b"></div><div style="position:absolute;left:556px;top:500px;width:12px;height:29px;border-radius:0 100% 100% 0/0 50% 50% 0;background:#f5f5f5"></div><div style="position:absolute;left:559px;top:513px;width:0;height:0;border-left:3px solid transparent;border-right:3px solid transparent;border-top:3px solid #111"></div><div style="position:absolute;left:463px;top:507px;font-family:'Liberation Sans', sans-serif;font-size:11.3px;color:#d2d2d2;line-height:14px;white-space:nowrap">Admin</div><div style="position:absolute;left:591px;top:499px;width:107px;height:29px;border:1px solid #2f2f2f;border-radius:15px 0 0 15px;border-right:none;background:#1b1b1b"></div><div style="position:absolute;left:698px;top:500px;width:12px;height:29px;border-radius:0 100% 100% 0/0 50% 50% 0;background:#f5f5f5"></div><div style="position:absolute;left:701px;top:513px;width:0;height:0;border-left:3px solid transparent;border-right:3px solid transparent;border-top:3px solid #111"></div><div style="position:absolute;left:605px;top:507px;font-family:'Liberation Sans', sans-serif;font-size:11.3px;color:#d2d2d2;line-height:14px;white-space:nowrap">iFrame</div><div style="position:absolute;left:765px;top:504px;width:14px;height:14px;border-radius:50%;background:#1a1a1a"></div><div style="position:absolute;left:835px;top:505px;width:29px;height:18px;border-radius:9px;background:#99d683"></div><div style="position:absolute;left:846px;top:506px;width:16px;height:16px;border-radius:50%;background:#fff;box-shadow:0 1px 1px rgba(0,0,0,0.3)"></div><div style="position:absolute;left:906px;top:505px;width:29px;height:18px;border-radius:9px;background:#f76565"></div><div style="position:absolute;left:907px;top:506px;width:16px;height:16px;border-radius:50%;background:#fff;box-shadow:0 1px 1px rgba(0,0,0,0.3)"></div><div style="position:absolute;left:969px;top:505px;width:29px;height:18px;border-radius:9px;background:#f76565"></div><div style="position:absolute;left:970px;top:506px;width:16px;height:16px;border-radius:50%;background:#fff;box-shadow:0 1px 1px rgba(0,0,0,0.3)"></div><div style="position:absolute;left:1037px;top:505px;width:29px;height:18px;border-radius:9px;background:#f76565"></div><div style="position:absolute;left:1038px;top:506px;width:16px;height:16px;border-radius:50%;background:#fff;box-shadow:0 1px 1px rgba(0,0,0,0.3)"></div><div style="position:absolute;left:1108px;top:494px;width:38px;height:38px;border:1px solid #2cabe3;border-radius:50%"></div><svg style="position:absolute;left:1120px;top:505px;" width="17" height="16" viewBox="0 0 17 16" preserveAspectRatio="none"><path d="M8 2.5 H2 V14.5 H14.5 V8" fill="none" stroke="#2cabe3" stroke-width="1.1"/><path d="M5.4 11.4 L6 8.8 L12.9 1.9 L15.1 4.1 L8.2 11 Z M11.6 3.2 L13.8 5.4" fill="none" stroke="#2cabe3" stroke-width="1" stroke-linejoin="round"/></svg><div style="position:absolute;left:1181px;top:494px;width:38px;height:38px;border:1px solid #f0706a;border-radius:50%;"></div><svg style="position:absolute;left:1195px;top:506px;" width="11" height="13" viewBox="0 0 11 13" preserveAspectRatio="none"><path d="M0.5 2 H10.5 M4 2 V1 H7 V2" fill="none" stroke="#f0706a" stroke-width="1"/><path d="M1.7 3 V12.3 H9.3 V3" fill="none" stroke="#f0706a" stroke-width="1.1"/><path d="M4.2 4.5 V10.5 M6.8 4.5 V10.5" stroke="#f0706a" stroke-width="1.1"/></svg><div style="position:absolute;left:160px;top:541px;width:1080px;height:1px;background:#2c2c2c"></div><svg style="position:absolute;left:176px;top:556px;" width="24" height="24" viewBox="0 0 24 24" preserveAspectRatio="none"><path fill="#ffffff" d="M9.00 3.30 L9.51 0.26 L14.49 0.26 L15.00 3.30 L16.03 3.73 L18.54 1.94 L22.06 5.46 L20.27 7.97 L20.70 9.00 L23.74 9.51 L23.74 14.49 L20.70 15.00 L20.27 16.03 L22.06 18.54 L18.54 22.06 L16.03 20.27 L15.00 20.70 L14.49 23.74 L9.51 23.74 L9.00 20.70 L7.97 20.27 L5.46 22.06 L1.94 18.54 L3.73 16.03 L3.30 15.00 L0.26 14.49 L0.26 9.51 L3.30 9.00 L3.73 7.97 L1.94 5.46 L5.46 1.94 L7.97 3.73 Z"/><circle cx="12" cy="12" r="3.65" fill="#202020"/></svg><div style="position:absolute;left:222px;top:561px;font-family:'Liberation Sans', sans-serif;font-size:11.3px;color:#c9c9c9;line-height:14px;white-space:nowrap">Settings</div><div style="position:absolute;left:321px;top:553px;width:102px;height:29px;border:1px solid #2f2f2f;border-radius:15px 0 0 15px;border-right:none;background:#1b1b1b"></div><div style="position:absolute;left:423px;top:554px;width:12px;height:29px;border-radius:0 100% 100% 0/0 50% 50% 0;background:#f5f5f5"></div><div style="position:absolute;left:426px;top:567px;width:0;height:0;border-left:3px solid transparent;border-right:3px solid transparent;border-top:3px solid #111"></div><div style="position:absolute;left:335px;top:561px;font-family:'Liberation Sans', sans-serif;font-size:11.3px;color:#d2d2d2;line-height:14px;white-space:nowrap">Unsorted</div><div style="position:absolute;left:449px;top:553px;width:107px;height:29px;border:1px solid #2f2f2f;border-radius:15px 0 0 15px;border-right:none;background:#1b1b1b"></div><div style="position:absolute;left:556px;top:554px;width:12px;height:29px;border-radius:0 100% 100% 0/0 50% 50% 0;background:#f5f5f5"></div><div style="position:absolute;left:559px;top:567px;width:0;height:0;border-left:3px solid transparent;border-right:3px solid transparent;border-top:3px solid #111"></div><div style="position:absolute;left:463px;top:561px;font-family:'Liberation Sans', sans-serif;font-size:11.3px;color:#d2d2d2;line-height:14px;white-space:nowrap">Admin</div><div style="position:absolute;left:591px;top:553px;width:107px;height:29px;border:1px solid #2f2f2f;border-radius:15px 0 0 15px;border-right:none;background:#1b1b1b"></div><div style="position:absolute;left:698px;top:554px;width:12px;height:29px;border-radius:0 100% 100% 0/0 50% 50% 0;background:#f5f5f5"></div><div style="position:absolute;left:701px;top:567px;width:0;height:0;border-left:3px solid transparent;border-right:3px solid transparent;border-top:3px solid #111"></div><div style="position:absolute;left:605px;top:561px;font-family:'Liberation Sans', sans-serif;font-size:11.3px;color:#d2d2d2;line-height:14px;white-space:nowrap">Internal</div><div style="position:absolute;left:765px;top:558px;width:14px;height:14px;border-radius:50%;background:#1a1a1a"></div><div style="position:absolute;left:835px;top:559px;width:29px;height:18px;border-radius:9px;background:#99d683;opacity:0.55"></div><div style="position:absolute;left:846px;top:560px;width:16px;height:16px;border-radius:50%;background:#aaa;box-shadow:0 1px 1px rgba(0,0,0,0.3)"></div><div style="position:absolute;left:906px;top:559px;width:29px;height:18px;border-radius:9px;background:#f76565"></div><div style="position:absolute;left:907px;top:560px;width:16px;height:16px;border-radius:50%;background:#fff;box-shadow:0 1px 1px rgba(0,0,0,0.3)"></div><div style="position:absolute;left:969px;top:559px;width:29px;height:18px;border-radius:9px;background:#f76565"></div><div style="position:absolute;left:970px;top:560px;width:16px;height:16px;border-radius:50%;background:#fff;box-shadow:0 1px 1px rgba(0,0,0,0.3)"></div><div style="position:absolute;left:1037px;top:559px;width:29px;height:18px;border-radius:9px;background:#f76565"></div><div style="position:absolute;left:1038px;top:560px;width:16px;height:16px;border-radius:50%;background:#fff;box-shadow:0 1px 1px rgba(0,0,0,0.3)"></div><div style="position:absolute;left:1108px;top:548px;width:38px;height:38px;border:1px solid #2cabe3;border-radius:50%"></div><svg style="position:absolute;left:1120px;top:559px;" width="17" height="16" viewBox="0 0 17 16" preserveAspectRatio="none"><path d="M8 2.5 H2 V14.5 H14.5 V8" fill="none" stroke="#2cabe3" stroke-width="1.1"/><path d="M5.4 11.4 L6 8.8 L12.9 1.9 L15.1 4.1 L8.2 11 Z M11.6 3.2 L13.8 5.4" fill="none" stroke="#2cabe3" stroke-width="1" stroke-linejoin="round"/></svg><div style="position:absolute;left:1181px;top:548px;width:38px;height:38px;border:1px solid #f0706a;border-radius:50%;opacity:0.55;"></div><svg style="position:absolute;left:1195px;top:560px;opacity:0.55;" width="11" height="13" viewBox="0 0 11 13" preserveAspectRatio="none"><path d="M0.5 2 H10.5 M4 2 V1 H7 V2" fill="none" stroke="#f0706a" stroke-width="1"/><path d="M1.7 3 V12.3 H9.3 V3" fill="none" stroke="#f0706a" stroke-width="1.1"/><path d="M4.2 4.5 V10.5 M6.8 4.5 V10.5" stroke="#f0706a" stroke-width="1.1"/></svg><div style="position:absolute;left:1305px;top:582px;width:40px;height:40px;border-radius:50%;background:#3497da"></div><div style="position:absolute;left:1319px;top:598px;width:0;height:0;border-left:6px solid transparent;border-right:6px solid transparent;border-bottom:6px solid #fff"></div>
</div></body></html>
